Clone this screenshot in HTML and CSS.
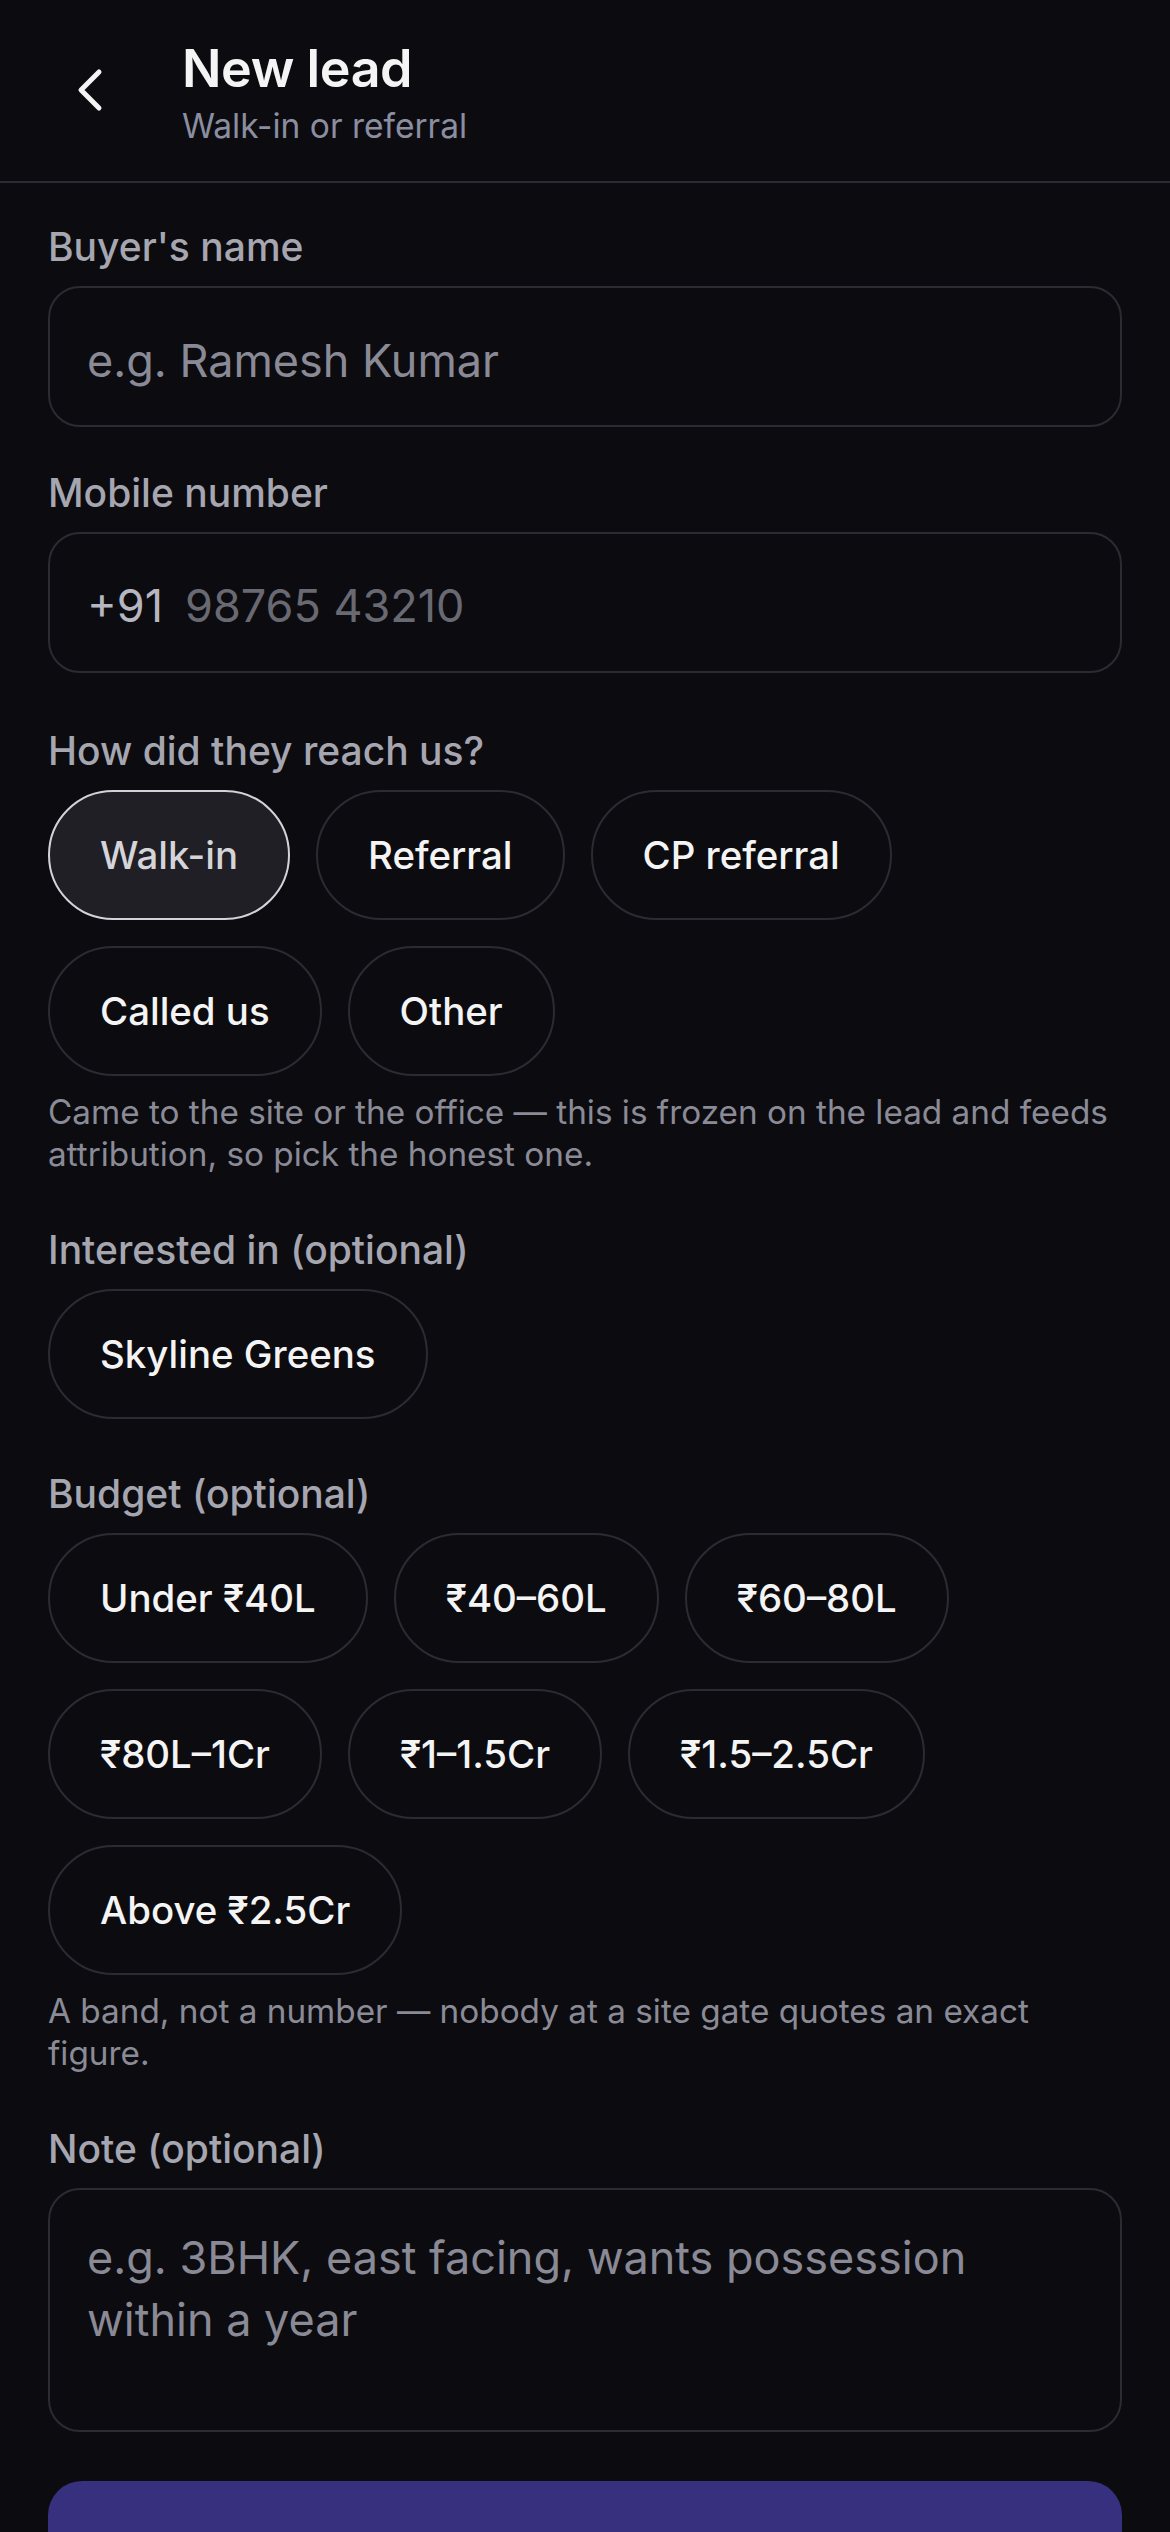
FILE: index.html
```html
<!DOCTYPE html>
<html lang="en">
<head>
<meta charset="utf-8">
<meta name="viewport" content="width=1170">
<title>New lead</title>
<link rel="stylesheet" href="styles.css">
</head>
<body>
<header class="topbar">
  <button class="back" aria-label="Back">
    <svg width="30" height="48" viewBox="0 0 30 48"><path d="M24 6 L6 24 L24 42" fill="none" stroke="#f4f4f5" stroke-width="5" stroke-linecap="round" stroke-linejoin="round"/></svg>
  </button>
  <div class="titles">
    <h1 class="title">New lead</h1>
    <p class="subtitle">Walk-in or referral</p>
  </div>
</header>

<main class="form">
  <div class="field field-name">
    <label class="label" for="name">Buyer's name</label>
    <input class="input" id="name" type="text" placeholder="e.g. Ramesh Kumar">
  </div>

  <div class="field field-phone">
    <label class="label" for="phone">Mobile number</label>
    <div class="input phone">
      <span class="cc">+91</span>
      <input class="phone-input" id="phone" type="tel" placeholder="98765 43210">
    </div>
  </div>

  <div class="field">
    <div class="label">How did they reach us?</div>
    <div class="chips">
      <button class="chip selected">Walk-in</button>
      <button class="chip">Referral</button>
      <button class="chip">CP referral</button>
      <button class="chip">Called us</button>
      <button class="chip">Other</button>
    </div>
    <p class="help">Came to the site or the office — this is frozen on the lead and feeds attribution, so pick the honest one.</p>
  </div>

  <div class="field">
    <div class="label">Interested in (optional)</div>
    <div class="chips">
      <button class="chip">Skyline Greens</button>
    </div>
  </div>

  <div class="field">
    <div class="label">Budget (optional)</div>
    <div class="chips">
      <button class="chip">Under ₹40L</button>
      <button class="chip">₹40–60L</button>
      <button class="chip">₹60–80L</button>
      <button class="chip">₹80L–1Cr</button>
      <button class="chip">₹1–1.5Cr</button>
      <button class="chip">₹1.5–2.5Cr</button>
      <button class="chip">Above ₹2.5Cr</button>
    </div>
    <p class="help">A band, not a number — nobody at a site gate quotes an exact figure.</p>
  </div>

  <div class="field field-note">
    <label class="label" for="note">Note (optional)</label>
    <textarea class="input textarea" id="note" placeholder="e.g. 3BHK, east facing, wants possession within a year"></textarea>
  </div>

  <button class="submit">Save lead</button>
</main>
</body>
</html>
```

FILE: styles.css
```css
* {
  box-sizing: border-box;
}

html, body {
  margin: 0;
  padding: 0;
  background: #0c0c10;
}

body {
  font-family: Inter, "Noto Sans", "DejaVu Sans", sans-serif;
  color: #f4f4f5;
  width: 1170px;
}

/* Header */
.topbar {
  display: flex;
  align-items: center;
  padding: 38px 48px 35px;
  border-bottom: 2px solid #2b2b34;
}

.back {
  width: 84px;
  height: 84px;
  margin: 0 50px 4px 0;
  padding: 0;
  border: 0;
  background: none;
  display: flex;
  align-items: center;
  justify-content: center;
  flex: none;
}

.back svg {
  display: block;
}

.titles {
  display: flex;
  flex-direction: column;
}

.title {
  margin: 0;
  font-size: 52px;
  line-height: 62px;
  font-weight: 600;
  color: #f4f4f5;
  letter-spacing: -0.4px;
}

.subtitle {
  margin: 6px 0 0;
  font-size: 33.5px;
  line-height: 40px;
  font-weight: 400;
  color: #8b8ea1;
}

/* Form */
.form {
  padding: 40px 48px 48px;
}

.field {
  margin-bottom: 51px;
}

.field-name {
  margin-bottom: 42px;
}

.field-phone {
  margin-bottom: 54px;
}

.field-note {
  margin-bottom: 49px;
}

.label {
  display: block;
  margin-bottom: 15px;
  font-size: 39px;
  line-height: 48px;
  font-weight: 500;
  color: #a6a6b1;
}

.input {
  display: block;
  width: 100%;
  height: 141px;
  padding: 44px 37px 37px;
  border: 2px solid #2b2b34;
  border-radius: 32px;
  background: transparent;
  font-family: inherit;
  font-size: 45px;
  line-height: 56px;
  font-weight: 400;
  color: #f4f4f5;
  outline: none;
}

.input::placeholder {
  color: #8a8a96;
  opacity: 1;
}

.phone {
  display: flex;
  align-items: center;
  gap: 22px;
}

.cc {
  color: #b6b6c0;
  flex: none;
}

.phone-input {
  flex: 1;
  min-width: 0;
  padding: 0;
  border: 0;
  background: transparent;
  font-family: inherit;
  font-size: 45px;
  line-height: 56px;
  color: #f4f4f5;
  outline: none;
}

.phone-input::placeholder {
  color: #696973;
  opacity: 1;
}

.textarea {
  height: 244px;
  padding: 37px 37px;
  line-height: 62px;
  resize: none;
}

/* Chips */
.chips {
  display: flex;
  flex-wrap: wrap;
  gap: 26px 26px;
}

.chip {
  height: 130px;
  padding: 39px 50px;
  border: 2px solid #2b2b34;
  border-radius: 65px;
  background: transparent;
  font-family: inherit;
  font-size: 38.4px;
  line-height: 48px;
  font-weight: 500;
  color: #f4f4f5;
  white-space: nowrap;
}

.chip.selected {
  background: #1f1f25;
  border-color: #d4d4d8;
  color: #d4d4d9;
}

.help {
  margin: 15px 0 0;
  font-size: 33.3px;
  line-height: 42px;
  font-weight: 400;
  color: #8b8b97;
}

/* Submit */
.submit {
  display: block;
  width: 100%;
  height: 156px;
  border: 0;
  border-radius: 34px;
  background: #36307f;
  font-family: inherit;
  font-size: 44px;
  font-weight: 600;
  color: #f4f4f5;
}
```
